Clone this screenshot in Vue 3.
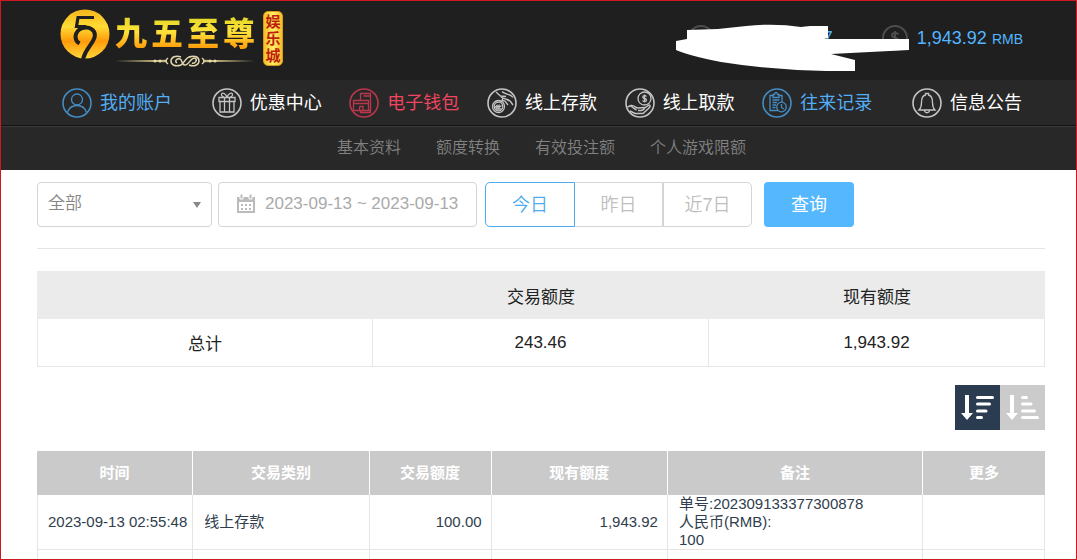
<script setup>
import { ref } from 'vue'

const category = ref('全部')
const dateRange = ref('2023-09-13 ~ 2023-09-13')
const activeDay = ref('今日')
const days = ['今日', '昨日', '近7日']
const order = ref('desc')

const menu = [
  { label: '我的账户', icon: 'user', tone: 'blue' },
  { label: '优惠中心', icon: 'gift', tone: 'plain' },
  { label: '电子钱包', icon: 'wallet', tone: 'red' },
  { label: '线上存款', icon: 'deposit', tone: 'plain' },
  { label: '线上取款', icon: 'withdraw', tone: 'plain' },
  { label: '往来记录', icon: 'record', tone: 'blue' },
  { label: '信息公告', icon: 'bell', tone: 'plain' },
]
const submenu = ['基本资料', '额度转换', '有效投注额', '个人游戏限额']
const columns = ['时间', '交易类别', '交易额度', '现有额度', '备注', '更多']
</script>

<template>
  <div class="page">
    <header class="top">
      <a class="logo" href="#" aria-label="九五至尊娱乐城">
        <svg class="emblem" width="50" height="50" viewBox="0 0 50 50" aria-hidden="true">
          <defs>
            <linearGradient id="gold" x1="0" y1="0" x2="0" y2="1">
              <stop offset="0" stop-color="#f4b41c" />
              <stop offset="0.35" stop-color="#ffdc35" />
              <stop offset="0.65" stop-color="#ff9a0a" />
              <stop offset="1" stop-color="#ffd83a" />
            </linearGradient>
          </defs>
          <circle cx="25" cy="25" r="24.5" fill="url(#gold)" />
          <path d="M34 8.500H18L16.500 17.500H26" fill="none" stroke="#1f1f1f" stroke-width="3.200" />
          <path d="M19.500 34.500C13.500 31 14.500 22.500 21.500 19.500C29 16.500 36.500 21 34.500 28.500C32.500 35.500 26 39 23 50" fill="none" stroke="#1f1f1f" stroke-width="4" />
        </svg>
        <span class="brand">
          <span class="brand-name"><b v-for="c in '九五至尊'" :key="c">{{ c }}</b></span>
          <svg class="flourish" width="140" height="14" viewBox="0 0 140 14" aria-hidden="true">
            <path d="M0 7L52 5.800V8.200ZM140 7L88 5.800V8.200Z" fill="#c7b983" />
            <g fill="none" stroke="#e0d6ad" stroke-width="1.500">
              <path d="M66 11C60 13 56 11 56 7S61 1 66 3M74 3C80 1 84 3 84 7S79 13 74 11" />
              <path d="M62 9C59 7 62 4 65 5C68 6 66 11 70 11C74 11 76 3 80 4C83 6 80 10 77 9M66 11C70 9 70 3 76 2.500" />
              <path d="M53 4Q49 7 53 10M87 4Q91 7 87 10" />
            </g>
            <g fill="#e8dda9"><circle cx="40" cy="7" r="1.500" /><circle cx="45" cy="7" r="1.500" /><circle cx="95" cy="7" r="1.500" /><circle cx="100" cy="7" r="1.500" /></g>
          </svg>
        </span>
        <span class="seal"><b v-for="c in '娱乐城'" :key="c">{{ c }}</b></span>
      </a>

      <div class="account">
        <svg class="round" width="28" height="28" viewBox="0 0 28 28" aria-hidden="true">
          <circle cx="14" cy="14" r="12" /><circle cx="14" cy="11" r="4" /><path d="M6 22Q14 12 22 22" />
        </svg>
        <span class="member">7</span>
        <svg class="round" width="28" height="28" viewBox="0 0 28 28" aria-hidden="true">
          <circle cx="14" cy="14" r="12" />
          <path d="M17.500 10.500C16 8 10.500 8.500 11 11.500C11.500 14.500 17.500 13 17.500 16.500C17.500 20 12 20 10.500 17M14 7V21" />
        </svg>
        <span class="balance">1,943.92 <small>RMB</small></span>
        <svg class="cover" width="234" height="50" viewBox="0 0 234 50" aria-hidden="true">
          <path d="M11 6L42 5L70 2Q99 -1 125 3L134 2H152V14L148 15H233V26L155 30L179 36V47H150Q95 46 45 38Q14 32 0 26V17L11 15Z" fill="#fff" />
        </svg>
      </div>
    </header>

    <nav class="menu">
      <a v-for="m in menu" :key="m.label" href="#" :class="m.tone">
        <svg width="30" height="30" viewBox="0 0 30 30" aria-hidden="true">
          <circle cx="15" cy="15" r="14" stroke-width="1.600" />
          <g v-if="m.icon === 'user'">
            <circle cx="15" cy="11.500" r="5.500" /><path d="M5.500 24.500C7 19.500 10.500 17.500 15 17.500S23 19.500 24.500 24.500" />
          </g>
          <g v-else-if="m.icon === 'gift'">
            <path d="M7 9.500H23V13.500H7ZM8 13.500V24H22V13.500M12.500 9.500V24M17.500 9.500V24M15 9.500C11 9.500 9 8 9.500 6C10.500 4 14 5.500 15 9.500C16 5.500 19.500 4 20.500 6C21 8 19 9.500 15 9.500" />
          </g>
          <g v-else-if="m.icon === 'wallet'">
            <path d="M11.500 12V5.500H21.500V24.500H11.500V22.500M14.500 8H21.500M14.500 22.500H21M4.500 12.500H19.500V22.500H4.500ZM4.500 15.500H19.500M10.500 18.500H14V22M10.500 18.500V22" />
          </g>
          <g v-else-if="m.icon === 'deposit'">
            <circle cx="11.500" cy="18.500" r="6" /><circle cx="11.500" cy="18.500" r="4.300" />
            <path d="M8 19.500L10 17.500V19.500L12 17.500V19.500L14.500 17.500M8.500 21H14.500" />
            <path d="M9 4L15 9.500C18 12 21 10 23.500 13.500L26 17M15 3.500C18 7 23 5 26 9.500M13 8L19 8.500M16 10L15 12.500L18 13L21 17M18 10.500L22 13" />
          </g>
          <g v-else-if="m.icon === 'withdraw'">
            <circle cx="19.500" cy="10.500" r="6.500" />
            <path d="M21.500 8.500C20.500 7 17.500 7.500 17.800 9.300C18 11 21.500 10 21.500 12C21.500 14 18.500 14 17.500 12.500M19.500 6.500V14.500" />
            <path d="M2.500 19L6 17.500C9 16.500 11 20.500 13.500 20L19 19.500C20 22 17 22.500 13 22.500M19 20.500L24 17C26 17 25 19 23.500 20.500L18 25.500H10L5 23M6 18L9 20.500L11.500 22" stroke-width="1.500" />
          </g>
          <g v-else-if="m.icon === 'record'">
            <path d="M11 7.500H8V22.500H16M17 7.500H20V14M11 6.500H12.500Q12.500 4.500 14 4.500T15.500 6.500H17V9.500H11ZM10.500 12H17.500M10.500 14.500H15M10.500 17H14M10.500 19.500H13.500" />
            <circle cx="19.500" cy="19" r="4.800" /><path d="M19.500 16V19.500L22 21" />
          </g>
          <g v-else>
            <path d="M7 22C9 20 9.500 18 9.500 14.500C9.500 10 11 7.500 13.500 7V5.500H16.500V7C19 7.500 20.500 10 20.500 14.500C20.500 18 21 20 23 22ZM12.500 22.500C13 25.500 17 25.500 17.500 22.500" />
          </g>
        </svg>
        <span>{{ m.label }}</span>
      </a>
    </nav>
    <nav class="submenu">
      <a v-for="s in submenu" :key="s" href="#">{{ s }}</a>
    </nav>

    <main>
      <form class="filters" @submit.prevent>
        <label class="picker">
          <select v-model="category" aria-label="交易类别"><option>全部</option></select>
          <i class="caret"></i>
        </label>
        <label class="dates">
          <svg width="20" height="20" viewBox="0 0 20 20" aria-hidden="true">
            <path d="M1 3H19V19H1Z" fill="#bbb" />
            <path d="M3 8H17V17H3Z" fill="#fff" />
            <path d="M4 0H7V5H4ZM13 0H16V5H13Z" fill="#bbb" stroke="#fff" />
            <path d="M5 10H7V12H5ZM9 10H11V12H9ZM13 10H15V12H13ZM5 14H7V16H5ZM9 14H11V16H9ZM13 14H15V16H13Z" fill="#bbb" />
          </svg>
          <input v-model="dateRange" type="text" aria-label="日期">
        </label>
        <div class="days">
          <button v-for="d in days" :key="d" type="button" :class="{ active: d === activeDay }" @click="activeDay = d">{{ d }}</button>
        </div>
        <button class="search" type="submit">查询</button>
      </form>

      <table class="summary">
        <thead><tr><th></th><th>交易额度</th><th>现有额度</th></tr></thead>
        <tbody><tr><td>总计</td><td>243.46</td><td>1,943.92</td></tr></tbody>
      </table>

      <div class="sort">
        <button type="button" aria-label="降序" :class="{ active: order === 'desc' }" @click="order = 'desc'">
          <svg width="45" height="45" viewBox="0 0 45 45" aria-hidden="true">
            <path d="M10 10H14V28H18L12 35L6 28H10Z" />
            <path d="M22.500 12.500H37.500M22.500 19H34.500M22.500 26H31M22.500 32.500H26.500" />
          </svg>
        </button>
        <button type="button" aria-label="升序" :class="{ active: order === 'asc' }" @click="order = 'asc'">
          <svg width="45" height="45" viewBox="0 0 45 45" aria-hidden="true">
            <path d="M10 10H14V28H18L12 35L6 28H10Z" />
            <path d="M22.500 12.500H26.500M22.500 19H31M22.500 26H34.500M22.500 32.500H37.500" />
          </svg>
        </button>
      </div>

      <table class="detail">
        <colgroup><col class="c-time"><col class="c-type"><col class="c-amount"><col class="c-type"><col class="c-note"><col class="c-amount"></colgroup>
        <thead><tr><th v-for="c in columns" :key="c">{{ c }}</th></tr></thead>
        <tbody>
          <tr>
            <td>2023-09-13 02:55:48</td>
            <td>线上存款</td>
            <td class="num">100.00</td>
            <td class="num">1,943.92</td>
            <td>单号:202309133377300878<br>人民币(RMB):<br>100</td>
            <td></td>
          </tr>
          <tr class="next"><td v-for="c in columns" :key="c"></td></tr>
        </tbody>
      </table>
    </main>
  </div>
</template>

<style>
body { margin: 0; background: #fff; }
</style>

<style scoped>
* { box-sizing: border-box; }
.page {
  position: relative;
  min-height: 100vh;
  font-family: "Liberation Sans", "Noto Sans CJK SC", sans-serif;
  color: #222;
}
.page::after {
  content: "";
  position: absolute;
  inset: 0;
  border: 1px solid #d01820;
  pointer-events: none;
}
a { text-decoration: none; }
button, input, select { font-family: inherit; margin: 0; }
svg { display: block; flex: none; }

.top {
  display: flex;
  justify-content: space-between;
  height: 80px;
  padding: 0 54px 0 60px;
  background: #1f1f1f;
}
.logo { display: flex; padding-top: 9px; }
.brand { margin: 5px 8px 0 5px; }
.brand-name { display: flex; gap: 4px; }
.brand-name b {
  font-size: 32px;
  line-height: 40px;
  font-weight: 900;
  color: transparent;
  background: linear-gradient(#e9d92a 15%, #ffe23c 45%, #ff9d0a 85%);
  background-clip: text;
  -webkit-background-clip: text;
}
.seal {
  display: flex;
  flex-direction: column;
  align-items: center;
  align-self: flex-start;
  width: 20px;
  padding: 1px 0;
  margin-top: 2px;
  border: 1px solid #d99b16;
  border-radius: 5px;
  background: linear-gradient(90deg, #f7bd27, #fff06a 50%, #f7bd27);
  color: #c01d0c;
  font-size: 15px;
  line-height: 17px;
}

.account {
  position: relative;
  display: flex;
  align-items: center;
  height: 76px;
  padding-left: 11px;
}
.round { fill: none; stroke: #4d4d4d; stroke-width: 2; }
.member { width: 118px; margin-right: 48px; text-align: right; font-size: 18px; color: #53b5ff; }
.balance { margin-left: 8px; font-size: 18px; color: #53b5ff; white-space: nowrap; }
.balance small { font-size: 14px; }
.cover { position: absolute; left: 0; top: 24px; }

.menu {
  display: flex;
  justify-content: space-between;
  align-items: center;
  height: 46px;
  padding: 0 55px 0 62px;
  background: #282828;
  border-bottom: 1px solid #111;
}
.menu a { display: flex; align-items: center; gap: 8px; font-size: 18px; line-height: 24px; white-space: nowrap; }
.menu a:first-child { margin-right: 12px; }
.menu a:last-child { margin-left: 12px; }
.menu svg { fill: none; stroke: #c4c4c4; stroke-width: 1.3; }
.menu .plain { color: #fff; }
.menu .blue { color: #53aef5; }
.menu .blue svg { stroke: #438dc4; }
.menu .red { color: #f04460; }
.menu .red svg { stroke: #b9364c; }

.submenu {
  display: flex;
  justify-content: center;
  align-items: center;
  gap: 35px;
  height: 44px;
  padding: 0 0 2px 6px;
  background: #282828;
  border-top: 1px solid #3a3a3a;
}
.submenu a { font-size: 16px; line-height: 24px; font-weight: 350; color: #828282; }

main { padding: 12px 32px 0 37px; }
.filters {
  display: flex;
  height: 67px;
  align-items: flex-start;
  border-bottom: 1px solid #e4e4e4;
}
.picker { position: relative; width: 175px; margin-right: 6px; }
.picker select {
  display: block;
  width: 100%;
  height: 45px;
  padding: 0 10px 2px;
  appearance: none;
  border: 1px solid #d5d5d5;
  border-radius: 4px;
  background: #fff;
  color: #858585;
  font-size: 17px;
  font-weight: 350;
}
.caret {
  position: absolute;
  right: 11px;
  top: 20px;
  border: 4px solid transparent;
  border-top: 6px solid #888;
  border-bottom: 0;
  pointer-events: none;
}
.dates {
  display: flex;
  align-items: center;
  width: 259px;
  height: 45px;
  padding: 0 0 2px 17px;
  margin-right: 8px;
  border: 1px solid #d5d5d5;
  border-radius: 4px;
}
.dates input {
  flex: 1;
  min-width: 0;
  padding: 0 0 0 9px;
  border: 0;
  outline: 0;
  background: none;
  color: #aaa;
  font-size: 17px;
}
.days { display: flex; margin-right: 12px; }
.days button {
  width: 89px;
  height: 45px;
  padding: 0 0 4px;
  border: 1px solid #d5d5d5;
  border-left-width: 0;
  background: #fff;
  color: #bebebe;
  font-size: 18px;
  font-weight: 350;
}
.days button:first-child { width: 90px; border-left-width: 1px; border-radius: 5px 0 0 5px; }
.days button:nth-child(2) { width: 88px; }
.days button:last-child { border-left-width: 1px; border-radius: 0 5px 5px 0; }
.days .active { border-color: #4eaaee; color: #4eaaee; }
.search {
  width: 90px;
  height: 45px;
  padding: 0 0 4px;
  border: 0;
  border-radius: 4px;
  background: #55b8ff;
  color: #fff;
  font-size: 18px;
}

table { width: 100%; border-spacing: 0; border-collapse: separate; table-layout: fixed; }
.summary { margin-top: 22px; font-size: 17px; text-align: center; }
.summary th { height: 48px; padding: 0; background: #ebebeb; font-weight: 400; }
.summary td { height: 48px; padding: 0; border: solid #e6e6e6; border-width: 0 1px 1px 0; }
.summary td:first-child { border-left-width: 1px; }

.sort { display: flex; justify-content: flex-end; margin: 18px 0 21px; }
.sort button { padding: 0; border: 0; background: #cbcbcb; }
.sort .active { background: #2c3c50; }
.sort path { fill: #fff; }
.sort path + path { stroke: #fff; stroke-width: 3; stroke-linecap: round; }

.detail { font-size: 15px; line-height: 18px; color: #2f3d4c; }
.c-time { width: 15.5%; }
.c-type { width: 17.5%; }
.c-amount { width: 12.1%; }
.c-note { width: 25.3%; }
.detail th { height: 44px; padding: 0; background: #cacaca; color: #fff; border-right: 1px solid #fff; }
.detail th:last-child { border-right: 0; }
.detail td {
  height: 55px;
  padding: 0 0 0 11px;
  border: solid #e8e4e4;
  border-width: 0 1px 1px 0;
  white-space: nowrap;
}
.detail td:first-child { padding-left: 10px; border-left-width: 1px; }
.detail .num { padding: 0 9px 0 0; text-align: right; }
.detail .next td { height: 10px; border-bottom: 0; }
</style>
